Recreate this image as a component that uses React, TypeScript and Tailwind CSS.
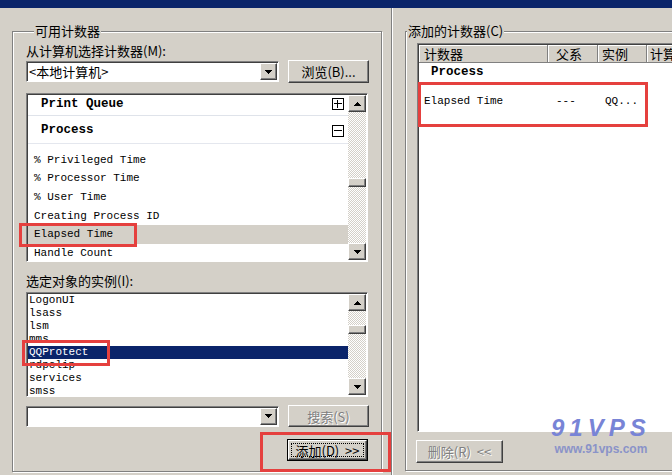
const raised =
  "border border-t-white border-l-white border-r-[#404040] border-b-[#404040] shadow-[inset_-1px_-1px_0_#808080] bg-[#d4d0c8]";
const sunken =
  "border border-t-[#808080] border-l-[#808080] border-r-white border-b-white shadow-[inset_1px_1px_0_#404040]";
const groupBox =
  "border border-[#808080] shadow-[inset_1px_1px_0_#ffffff,1px_1px_0_#ffffff]";
const redBox = "absolute border-[3px] border-[#e5403e]";
const disabledText = "text-[#808080] [text-shadow:1px_1px_0_#ffffff]";

const counters = [
  "% Privileged Time",
  "% Processor Time",
  "% User Time",
  "Creating Process ID",
  "Elapsed Time",
  "Handle Count",
];

const instances = ["LogonUI", "lsass", "lsm", "mms", "QQProtect", "rdpclip", "services", "smss"];

function Arrow({ down }: { down?: boolean }) {
  return (
    <svg width="7" height="4" viewBox="0 0 7 4" shapeRendering="crispEdges">
      <path d={down ? "M0 0h7L3.5 4z" : "M0 4h7L3.5 0z"} fill="#000" />
    </svg>
  );
}

function TreeBox({ open }: { open?: boolean }) {
  return (
    <svg width="12" height="12" viewBox="0 0 12 12" shapeRendering="crispEdges">
      <rect x="0.5" y="0.5" width="11" height="11" fill="#fff" stroke="#000" />
      <rect x="2" y="5" width="8" height="1" fill="#000" />
      {!open && <rect x="5" y="2" width="1" height="8" fill="#000" />}
    </svg>
  );
}

function ScrollBar({ thumb }: { thumb: string }) {
  return (
    <div className="flex w-[18px] shrink-0 flex-col">
      <div className={`${raised} flex h-[17px] shrink-0 items-center justify-center`}>
        <Arrow />
      </div>
      <div className="flex-1 bg-[repeating-conic-gradient(#d4d0c8_0%_25%,#ffffff_0%_50%)] bg-[length:2px_2px]">
        <div className={`${raised} h-[9px] ${thumb}`} />
      </div>
      <div className={`${raised} flex h-[17px] shrink-0 items-center justify-center`}>
        <Arrow down />
      </div>
    </div>
  );
}

function Combo({ text }: { text?: string }) {
  return (
    <div className={`${sunken} flex h-[21px] w-[253px] shrink-0 items-center bg-white p-[1px]`}>
      <span className="flex-1 pl-[1px] leading-[15px]">{text}</span>
      <div className={`${raised} flex h-full w-[17px] items-center justify-center`}>
        <Arrow down />
      </div>
    </div>
  );
}

export default function App() {
  return (
    <div className="relative h-[475px] w-[672px] overflow-hidden bg-[#d4d0c8] font-['Noto_Sans_CJK_SC',sans-serif] text-[13px] leading-[15px] text-black">
      <div className="h-[8px] bg-[#0a246a]" />
      <div className="flex">
        <fieldset className={`${groupBox} ml-[12px] mt-[16px] h-[448px] w-[370px] shrink-0 pl-[13px]`}>
          <legend className="ml-[8px] bg-[#d4d0c8] px-[1px] leading-[14px]">可用计数器</legend>
          <div className="mt-[5px] h-[15px]">从计算机选择计数器(M):</div>
          <div className="mt-[2px] flex h-[23px] items-center gap-[9px]">
            <Combo text="<本地计算机>" />
            <div className={`${raised} flex h-[23px] w-[81px] shrink-0 items-center justify-center`}>浏览(B)...</div>
          </div>

          <div className={`${sunken} mt-[10px] flex h-[169px] w-[342px] bg-white p-[1px]`}>
            <div className="flex flex-1 flex-col overflow-hidden font-['Liberation_Mono',monospace] text-[11px] leading-[13px]">
              <div className="flex h-[18px] shrink-0 items-center justify-between pl-[13px] pr-[4px] text-[12.5px] font-bold">
                Print Queue
                <TreeBox />
              </div>
              <div className="mt-[2px] h-px shrink-0 bg-[#dfe3ea]" />
              <div className="flex h-[28px] shrink-0 items-center justify-between border-b border-[#e4e7ee] pl-[13px] pr-[4px] pt-[2px] text-[12.5px] font-bold">
                Process
                <TreeBox open />
              </div>
              <div className="pt-[7px]">
                {counters.map((c) => (
                  <div
                    key={c}
                    className={`flex h-[18.6px] items-center pl-[6px] ${c === "Elapsed Time" ? "bg-[#d4d0c8]" : ""}`}
                  >
                    {c}
                  </div>
                ))}
              </div>
            </div>
            <ScrollBar thumb="mt-[66px]" />
          </div>

          <div className="mt-[11px] h-[15px]">选定对象的实例(I):</div>
          <div className={`${sunken} mt-[4px] flex h-[105px] w-[342px] bg-white p-[1px]`}>
            <div className="flex flex-1 flex-col overflow-hidden font-['Liberation_Mono',monospace] text-[11px] leading-[13px]">
              {instances.map((i) => (
                <div
                  key={i}
                  className={`h-[13px] shrink-0 pl-[1px] ${i === "QQProtect" ? "bg-[#0a246a] text-white" : ""}`}
                >
                  {i}
                </div>
              ))}
            </div>
            <ScrollBar thumb="mt-[14px]" />
          </div>

          <div className="mt-[8px] flex h-[22px] items-center gap-[9px]">
            <Combo />
            <div className={`${raised} ${disabledText} flex h-[22px] w-[81px] shrink-0 items-center justify-center`}>搜索(S)</div>
          </div>
          <div className="mt-[12px] flex w-[342px] justify-end">
            <div className="h-[22px] w-[81px] border border-black">
              <div className={`${raised} h-full p-[2px]`}>
                <div className="flex h-full items-center justify-center border border-dotted border-black">
                  添加(D)&nbsp;&nbsp;&gt;&gt;
                </div>
              </div>
            </div>
          </div>
        </fieldset>

        <div className="ml-[9px] h-[467px] w-[2px] shrink-0 border-l border-r border-l-[#808080] border-r-white" />

        <fieldset className={`${groupBox} ml-[12px] mt-[16px] h-[447px] w-[290px] shrink-0`}>
          <legend className="ml-[1px] bg-[#d4d0c8] px-[1px] leading-[14px]">添加的计数器(C)</legend>
          <div className={`${sunken} ml-[11px] mt-[5px] flex h-[389px] w-[270px] flex-col bg-white p-[1px]`}>
            <div className="flex h-[18px] shrink-0 leading-[17px]">
              <div className="w-[129px] shrink-0 border-b border-r border-[#808080] bg-[#d4d0c8] pl-[5px] shadow-[inset_1px_1px_0_#fff]">计数器</div>
              <div className="w-[50px] shrink-0 border-b border-r border-[#808080] bg-[#d4d0c8] pl-[8px] shadow-[inset_1px_1px_0_#fff]">父系</div>
              <div className="w-[49px] shrink-0 border-b border-r border-[#808080] bg-[#d4d0c8] pl-[4px] shadow-[inset_1px_1px_0_#fff]">实例</div>
              <div className="w-[60px] shrink-0 whitespace-nowrap border-b border-r border-[#808080] bg-[#d4d0c8] pl-[3px] shadow-[inset_1px_1px_0_#fff]">计算机</div>
            </div>
            <div className="flex h-[19px] shrink-0 items-center pl-[12px] font-['Liberation_Mono',monospace] text-[12.5px] font-bold">
              Process
            </div>
            <div className="mt-[10px] flex h-[18px] shrink-0 items-center font-['Liberation_Mono',monospace] text-[11px]">
              <div className="w-[129px] shrink-0 pl-[5px]">Elapsed Time</div>
              <div className="w-[50px] shrink-0 pl-[8px]">---</div>
              <div className="w-[49px] shrink-0 pl-[7px]">QQ...</div>
            </div>
          </div>
          <div className={`${raised} ${disabledText} ml-[10px] mt-[8px] flex h-[23px] w-[87px] items-center justify-center`}>
            删除(R)&nbsp;&nbsp;&lt;&lt;
          </div>
        </fieldset>
      </div>

      <div className="absolute left-[551px] top-[416px] flex flex-col items-center">
        <span className="font-['Liberation_Sans',sans-serif] text-[24px] font-black italic leading-[24px] tracking-[5px] text-[#7884d6]">
          91VPS
        </span>
        <span className="mt-[3px] font-['Liberation_Sans',sans-serif] text-[12px] font-bold leading-[12px] text-[#8a93c8]">
          www.91vps.com
        </span>
      </div>

      <div className={`${redBox} left-[19px] top-[223px] h-[24px] w-[118px]`} />
      <div className={`${redBox} left-[22px] top-[340px] h-[26px] w-[88px]`} />
      <div className={`${redBox} left-[260px] top-[432px] h-[40px] w-[131px]`} />
      <div className={`${redBox} left-[418px] top-[82px] h-[45px] w-[230px]`} />
    </div>
  );
}
